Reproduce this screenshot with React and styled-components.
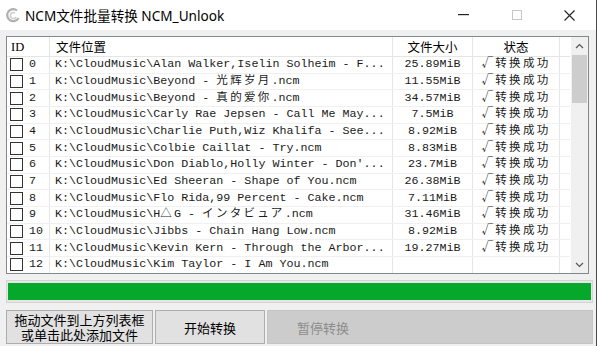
import React from "react";
import styled, { createGlobalStyle } from "styled-components";

const GlobalStyle = createGlobalStyle`
  html, body {
    margin: 0;
    padding: 0;
    background: #ffffff;
  }
`;

const Window = styled.div`
  width: 596px;
  height: 346px;
  border-right: 1px solid #4a4a4a;
  display: flex;
  flex-direction: column;
  background: #f0f0f0;
  font-family: "Noto Sans CJK SC", "Noto Sans", sans-serif;
  overflow: hidden;
`;

const TitleBar = styled.div`
  height: 30px;
  background: #ffffff;
  display: flex;
  align-items: center;
  padding-left: 5px;
  flex-shrink: 0;
`;

const Title = styled.div`
  font-size: 13.6px;
  color: #000;
  margin-left: 4px;
  font-family: "Noto Sans", "Noto Sans CJK SC", sans-serif;
`;

const Caption = styled.div`
  margin-left: auto;
  display: flex;
  height: 100%;
`;

const CaptionButton = styled.div`
  width: 53px;
  height: 100%;
  display: flex;
  align-items: center;
  justify-content: center;
`;

const Body = styled.div`
  flex: 1;
  display: flex;
  flex-direction: column;
  padding: 6px 3px 0 6px;
`;

const ListView = styled.div`
  height: 238px;
  width: 583px;
  box-sizing: border-box;
  border: 1px solid #828790;
  background: #fff;
  display: flex;
`;

const Grid = styled.div`
  flex: 1;
  overflow: hidden;
`;

const Row = styled.div`
  display: grid;
  grid-template-columns: 43px 343px 80px 87px 1fr;
  height: ${(p) => (p.head ? "20px" : "16.67px")};
  border-bottom: 1px solid ${(p) => (p.head ? "#e5e5e5" : "#f0f0f0")};
  box-sizing: border-box;
  font-family: "Liberation Mono", "Noto Sans CJK SC", monospace;
  font-size: 11.7px;
  color: #1a1a1a;
`;

const Cell = styled.div`
  display: flex;
  align-items: center;
  justify-content: ${(p) => (p.center ? "center" : "flex-start")};
  padding-left: ${(p) => p.pad || 0}px;
  border-right: 1px solid ${(p) => (p.line ? "#e5e5e5" : "transparent")};
  min-width: 0;
`;

const Text = styled.span`
  white-space: pre;
  line-height: 15px;
`;

const HeadText = styled.span`
  font-family: ${(p) => (p.mono ? `"Liberation Serif", serif` : `"Noto Sans CJK SC", sans-serif`)};
  font-size: 12.5px;
  line-height: 18px;
  color: #000;
`;

const Wide = styled.span`
  font-family: "Noto Sans CJK SC", sans-serif;
  font-size: 11.5px;
  letter-spacing: 2.3px;
  line-height: 1;
`;

const Check = styled.span`
  width: 11px;
  height: 11px;
  border: 1px solid #333;
  background: #fff;
  margin-right: 6px;
  flex-shrink: 0;
`;

const ScrollBar = styled.div`
  width: 17px;
  margin-left: 1px;
  background: #f0f0f0;
  display: flex;
  flex-direction: column;
  align-items: center;
`;

const Arrow = styled.div`
  height: 17px;
  display: flex;
  align-items: center;
  justify-content: center;
`;

const Thumb = styled.div`
  width: 15px;
  height: 48px;
  background: #cdcdcd;
  margin-top: 1px;
`;

const Track = styled.div`
  flex: 1;
`;

const Progress = styled.div`
  margin-top: 6px;
  height: 23px;
  box-sizing: border-box;
  border: 1px solid #d4d4d4;
  background: #e6e6e6;
  padding: 2px 1px;
`;

const Bar = styled.div`
  height: 100%;
  background: #06a82b;
`;

const Buttons = styled.div`
  margin-top: 7px;
  height: 34px;
  display: flex;
  gap: 2px;
`;

const Button = styled.div`
  width: ${(p) => p.w || "auto"};
  flex: ${(p) => (p.grow ? 1 : "none")};
  box-sizing: border-box;
  border: 1px solid ${(p) => (p.disabled ? "#c4c4c4" : "#adadad")};
  background: ${(p) => (p.disabled ? "#cccccc" : "#e1e1e1")};
  color: ${(p) => (p.disabled ? "#8d8d8d" : "#000")};
  font-size: 13px;
  line-height: 15px;
  text-align: center;
  display: flex;
  align-items: center;
  justify-content: ${(p) => (p.grow ? "flex-start" : "center")};
  padding-left: ${(p) => (p.grow ? "29px" : "0")};
`;

const rows = [
  ["0", "K:\\CloudMusic\\Alan Walker,Iselin Solheim - F...", "25.89MiB"],
  ["1", "K:\\CloudMusic\\Beyond - 光辉岁月.ncm", "11.55MiB"],
  ["2", "K:\\CloudMusic\\Beyond - 真的爱你.ncm", "34.57MiB"],
  ["3", "K:\\CloudMusic\\Carly Rae Jepsen - Call Me May...", "7.5MiB"],
  ["4", "K:\\CloudMusic\\Charlie Puth,Wiz Khalifa - See...", "8.92MiB"],
  ["5", "K:\\CloudMusic\\Colbie Caillat - Try.ncm", "8.83MiB"],
  ["6", "K:\\CloudMusic\\Don Diablo,Holly Winter - Don'...", "23.7MiB"],
  ["7", "K:\\CloudMusic\\Ed Sheeran - Shape of You.ncm", "26.38MiB"],
  ["8", "K:\\CloudMusic\\Flo Rida,99 Percent - Cake.ncm", "7.11MiB"],
  ["9", "K:\\CloudMusic\\H△G - インタビュア.ncm", "31.46MiB"],
  ["10", "K:\\CloudMusic\\Jibbs - Chain Hang Low.ncm", "8.92MiB"],
  ["11", "K:\\CloudMusic\\Kevin Kern - Through the Arbor...", "19.27MiB"],
  ["12", "K:\\CloudMusic\\Kim Taylor - I Am You.ncm", ""],
];

// full-width characters take two columns in the list's monospace font
const split = (text) =>
  text.split(/([^\x00-\x7f]+)/).map((part, i) =>
    /[^\x00-\x7f]/.test(part) ? <Wide key={i}>{part}</Wide> : part
  );

const AppIcon = () => (
  <svg width="16" height="16" viewBox="0 0 16 16">
    <path d="M12 3.5 A6 6 0 1 0 13.5 11" fill="none" stroke="#b0b0b0" strokeWidth="2.2" />
    <path d="M10 6 A3 3 0 1 0 11 10" fill="none" stroke="#cfcfcf" strokeWidth="1.6" />
  </svg>
);

export default function App() {
  return (
    <>
      <GlobalStyle />
      <Window>
        <TitleBar>
          <AppIcon />
          <Title>NCM文件批量转换 NCM_Unlook</Title>
          <Caption>
            <CaptionButton>
              <svg width="11" height="2"><rect width="11" height="1.2" fill="#222" /></svg>
            </CaptionButton>
            <CaptionButton>
              <svg width="10" height="10"><rect x="0.5" y="0.5" width="9" height="9" fill="none" stroke="#c8c8c8" /></svg>
            </CaptionButton>
            <CaptionButton>
              <svg width="11" height="11"><path d="M0.5 0.5 L10.5 10.5 M10.5 0.5 L0.5 10.5" stroke="#222" strokeWidth="1.1" /></svg>
            </CaptionButton>
          </Caption>
        </TitleBar>
        <Body>
          <ListView>
            <Grid>
              <Row head>
                <Cell line pad={4}><HeadText mono>ID</HeadText></Cell>
                <Cell line pad={6}><HeadText>文件位置</HeadText></Cell>
                <Cell line center><HeadText>文件大小</HeadText></Cell>
                <Cell line center><HeadText>状态</HeadText></Cell>
                <Cell />
              </Row>
              {rows.map(([id, path, size]) => (
                <Row key={id}>
                  <Cell line pad={3}><Check /><Text>{id}</Text></Cell>
                  <Cell line pad={5}><Text>{split(path)}</Text></Cell>
                  <Cell line center><Text>{size}</Text></Cell>
                  <Cell line center>{size && <Text>{split("√转换成功")}</Text>}</Cell>
                  <Cell />
                </Row>
              ))}
            </Grid>
            <ScrollBar>
              <Arrow>
                <svg width="9" height="6"><path d="M1 5 L4.5 1.5 L8 5" fill="none" stroke="#555" strokeWidth="1.2" /></svg>
              </Arrow>
              <Thumb />
              <Track />
              <Arrow>
                <svg width="9" height="6"><path d="M1 1 L4.5 4.5 L8 1" fill="none" stroke="#555" strokeWidth="1.2" /></svg>
              </Arrow>
            </ScrollBar>
          </ListView>
          <Progress>
            <Bar style={{ width: "100%" }} />
          </Progress>
          <Buttons>
            <Button w="147px">拖动文件到上方列表框<br />或单击此处添加文件</Button>
            <Button w="110px">开始转换</Button>
            <Button grow disabled>暂停转换</Button>
          </Buttons>
        </Body>
      </Window>
    </>
  );
}
